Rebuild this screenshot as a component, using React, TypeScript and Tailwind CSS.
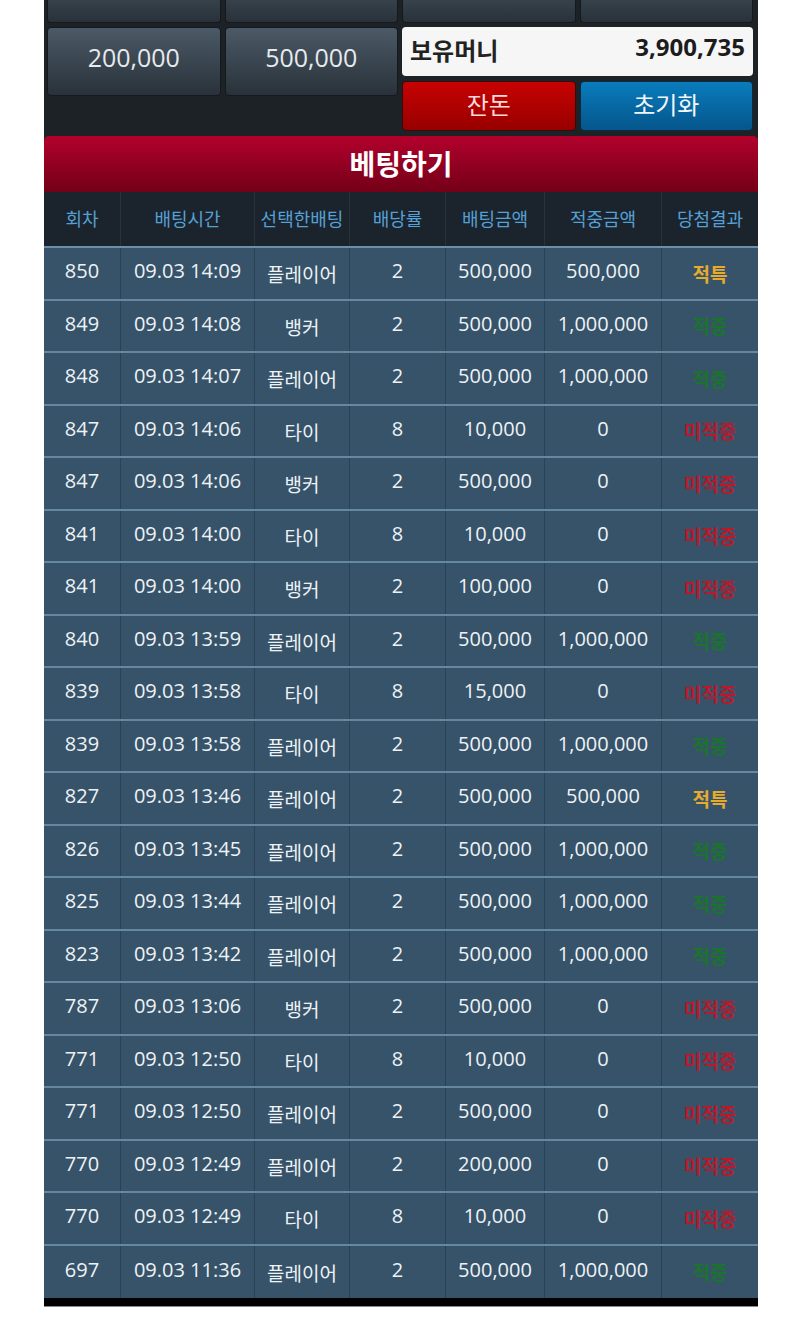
import React from "react";

const font = { fontFamily: '"Open Sans", "Noto Sans CJK KR", sans-serif' };

type Bet = [string, string, string, string, string, string, string];

const bets: Bet[] = [
  ["850", "09.03 14:09", "플레이어", "2", "500,000", "500,000", "적특"],
  ["849", "09.03 14:08", "뱅커", "2", "500,000", "1,000,000", "적중"],
  ["848", "09.03 14:07", "플레이어", "2", "500,000", "1,000,000", "적중"],
  ["847", "09.03 14:06", "타이", "8", "10,000", "0", "미적중"],
  ["847", "09.03 14:06", "뱅커", "2", "500,000", "0", "미적중"],
  ["841", "09.03 14:00", "타이", "8", "10,000", "0", "미적중"],
  ["841", "09.03 14:00", "뱅커", "2", "100,000", "0", "미적중"],
  ["840", "09.03 13:59", "플레이어", "2", "500,000", "1,000,000", "적중"],
  ["839", "09.03 13:58", "타이", "8", "15,000", "0", "미적중"],
  ["839", "09.03 13:58", "플레이어", "2", "500,000", "1,000,000", "적중"],
  ["827", "09.03 13:46", "플레이어", "2", "500,000", "500,000", "적특"],
  ["826", "09.03 13:45", "플레이어", "2", "500,000", "1,000,000", "적중"],
  ["825", "09.03 13:44", "플레이어", "2", "500,000", "1,000,000", "적중"],
  ["823", "09.03 13:42", "플레이어", "2", "500,000", "1,000,000", "적중"],
  ["787", "09.03 13:06", "뱅커", "2", "500,000", "0", "미적중"],
  ["771", "09.03 12:50", "타이", "8", "10,000", "0", "미적중"],
  ["771", "09.03 12:50", "플레이어", "2", "500,000", "0", "미적중"],
  ["770", "09.03 12:49", "플레이어", "2", "200,000", "0", "미적중"],
  ["770", "09.03 12:49", "타이", "8", "10,000", "0", "미적중"],
  ["697", "09.03 11:36", "플레이어", "2", "500,000", "1,000,000", "적중"],
];

const headers = ["회차", "배팅시간", "선택한배팅", "배당률", "배팅금액", "적중금액", "당첨결과"];

const cols = "grid grid-cols-[77px_134px_95px_96px_99px_117px_96px]";

function resultColor(r: string) {
  if (r === "적특") return "text-[#e6ab2e]";
  if (r === "적중") return "text-[#1b742c]";
  return "text-[#b8192b]";
}

function ChipButton({ label, h }: { label?: string; h: string }) {
  return (
    <button
      className={`${h} rounded-[4px] border border-[#15191d] bg-gradient-to-b from-[#4b5a67] to-[#29323a] text-[25px] text-[#e6eaed] flex items-center justify-center pb-[8px]`}
    >
      {label}
    </button>
  );
}

export default function App() {
  return (
    <div className="min-h-[1326px] bg-white" style={font}>
      <div className="ml-[44px] w-[714px] bg-[#1d2227]">
        <div className="grid grid-cols-4 gap-x-[4px] gap-y-[4px] pl-[3px] pr-[5px]">
          <button className="h-[23px] rounded-b-[4px] border border-t-0 border-[#15191d] bg-gradient-to-b from-[#36414b] to-[#29323a]" />
          <button className="h-[23px] rounded-b-[4px] border border-t-0 border-[#15191d] bg-gradient-to-b from-[#36414b] to-[#29323a]" />
          <button className="h-[23px] rounded-b-[4px] border border-t-0 border-[#15191d] bg-gradient-to-b from-[#36414b] to-[#29323a]" />
          <button className="h-[23px] rounded-b-[4px] border border-t-0 border-[#15191d] bg-gradient-to-b from-[#36414b] to-[#29323a]" />
          <div className="col-span-2 grid grid-cols-2 gap-[4px] self-start">
            <ChipButton label="200,000" h="h-[69px]" />
            <ChipButton label="500,000" h="h-[69px]" />
          </div>
          <div className="col-span-2 flex flex-col gap-[5px]">
            <div className="h-[49px] rounded-[4px] bg-[#f6f6f6] flex items-center justify-between pl-[8px] pr-[8px]">
              <span className="text-[24px] font-bold text-[#222] pb-[1px]">보유머니</span>
              <span className="text-[24px] font-bold text-[#1c1c1c] pb-[9px]">3,900,735</span>
            </div>
            <div className="grid grid-cols-2 gap-[4px]">
              <button className="h-[50px] rounded-[4px] border border-[#3a0a0a] bg-gradient-to-b from-[#c70202] to-[#980000] text-[24px] text-[#ffd9d9] pb-[2px]">
                잔돈
              </button>
              <button className="h-[50px] rounded-[4px] border border-[#0c2a40] bg-gradient-to-b from-[#0a7cbc] to-[#05568c] text-[24px] text-[#f2f7fb] pb-[2px]">
                초기화
              </button>
            </div>
          </div>
        </div>

        <div className="mt-[5px] h-[56px] rounded-t-[5px] bg-gradient-to-b from-[#b3012c] to-[#740018] flex items-center justify-center">
          <span className="text-[28px] font-bold text-white">베팅하기</span>
        </div>

        <div className={`${cols} h-[56px] bg-[#1b242c] border-b-2 border-[#6d8ea5]`}>
          {headers.map((h, i) => (
            <div
              key={h}
              className={`flex items-center justify-center text-[18px] text-[#55a0d6] ${i < 6 ? "border-r border-[#28323b]" : ""}`}
            >
              {h}
            </div>
          ))}
        </div>

        {bets.map((b, r) => (
          <div
            key={r}
            className={`${cols} h-[52.5px] bg-[#36536a] ${r < bets.length - 1 ? "border-b-2 border-[#6587a0]" : ""}`}
          >
            {b.map((c, i) => (
              <div
                key={i}
                className={`flex items-center justify-center ${i < 6 ? "border-r border-[#2a4256]" : ""} ${
                  i === 6
                    ? `font-bold text-[19px] pt-[3px] ${resultColor(c)}`
                    : i === 2
                      ? "text-[19px] text-[#eef2f5] pt-[4px]"
                      : "text-[20px] text-[#eef2f5] pb-[4px]"
                }`}
              >
                {c}
              </div>
            ))}
          </div>
        ))}
        <div className="h-[9px] bg-black border-b border-[#888]" />
      </div>
    </div>
  );
}
